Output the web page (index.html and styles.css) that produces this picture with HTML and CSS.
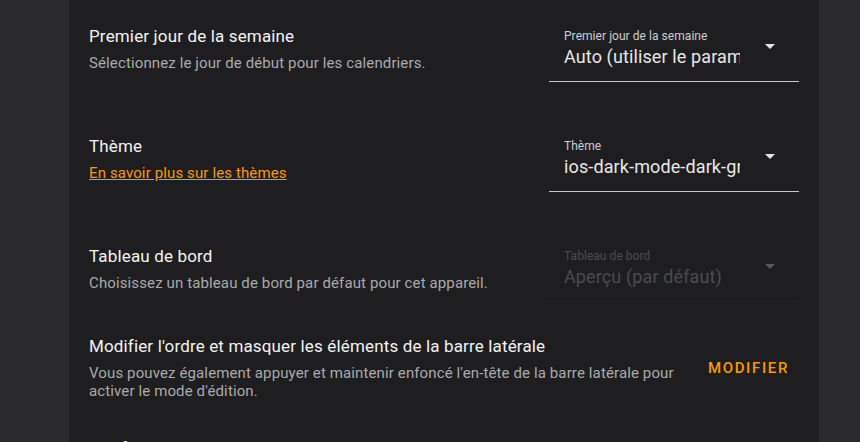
FILE: index.html
```html
<!DOCTYPE html>
<html lang="fr">
<head>
  <meta charset="UTF-8" />
  <meta name="viewport" content="width=device-width, initial-scale=1.0"/>
  <title>Profil</title>
  <link rel="stylesheet" href="styles.css">
</head>
<body>
  <div class="card">
    <div class="row pick">
      <div class="info">
        <div class="heading">Premier jour de la semaine</div>
        <div class="desc">Sélectionnez le jour de début pour les calendriers.</div>
      </div>
      <div class="select">
        <div class="field">
          <span class="label">Premier jour de la semaine</span>
          <span class="value">Auto (utiliser le paramètre de langue)</span>
        </div>
        <span class="arrow"></span>
      </div>
    </div>

    <div class="row pick">
      <div class="info">
        <div class="heading">Thème</div>
        <div class="desc"><a href="#" class="link">En savoir plus sur les thèmes</a></div>
      </div>
      <div class="select">
        <div class="field">
          <span class="label">Thème</span>
          <span class="value">ios-dark-mode-dark-green</span>
        </div>
        <span class="arrow"></span>
      </div>
    </div>

    <div class="row pick">
      <div class="info">
        <div class="heading">Tableau de bord</div>
        <div class="desc">Choisissez un tableau de bord par défaut pour cet appareil.</div>
      </div>
      <div class="select disabled">
        <div class="field">
          <span class="label">Tableau de bord</span>
          <span class="value">Aperçu (par défaut)</span>
        </div>
        <span class="arrow"></span>
      </div>
    </div>

    <div class="row action">
      <div class="info">
        <div class="heading">Modifier l'ordre et masquer les éléments de la barre latérale</div>
        <div class="desc">Vous pouvez également appuyer et maintenir enfoncé l'en-tête de la barre latérale pour activer le mode d'édition.</div>
      </div>
      <button class="text-btn">Modifier</button>
    </div>

    <div class="row next">
      <div class="info">
        <div class="heading">Notifications push</div>
        <div class="desc">Envoyer des notifications à cet appareil.</div>
      </div>
    </div>
  </div>
</body>
</html>
```

FILE: styles.css
```css
body {
  margin: 0;
  background: #2a2a2c;
  font-family: Roboto, "Noto Sans", sans-serif;
  overflow: hidden;
}

.card {
  margin: -7px 0 0 69px;
  width: 750px;
  min-height: 470px;
  background: #1e1e20;
}

.row {
  display: flex;
  align-items: center;
  gap: 16px;
  padding: 0 20px;
}

.row.pick {
  min-height: 110px;
}

.info {
  flex: 1;
}

.heading {
  font-size: 17px;
  line-height: 24px;
  letter-spacing: 0.15px;
  color: #f3f3f3;
}

.desc {
  margin-top: 6px;
  font-size: 15px;
  line-height: 18px;
  letter-spacing: 0.12px;
  color: #aaaaac;
}

.link {
  color: #ff9800;
}

/* dropdown */
.select {
  display: flex;
  align-items: flex-start;
  box-sizing: border-box;
  width: 250px;
  height: 56px;
  margin-top: 12px;
  padding: 2px 0 0 15px;
  border-bottom: 1px solid #c8c8c8;
}

.field {
  width: 176px;
  overflow: hidden;
  white-space: nowrap;
}

.label {
  display: block;
  font-size: 12px;
  line-height: 16px;
  letter-spacing: 0.05px;
  color: #cfcfd0;
}

.value {
  display: block;
  margin-top: 1px;
  font-size: 18px;
  line-height: 24px;
  letter-spacing: 0.12px;
  color: #e8e8e8;
}

.arrow {
  width: 0;
  height: 0;
  margin: 16px 0 0 25px;
  border-left: 5px solid transparent;
  border-right: 5px solid transparent;
  border-top: 5px solid #e4e4e4;
}

.select.disabled {
  border-bottom-color: #252527;
}

.select.disabled .label,
.select.disabled .value {
  color: #4c4c4e;
}

.select.disabled .arrow {
  border-top-color: #58585a;
}

.row.action {
  padding: 11px 22px 11px 20px;
}

.text-btn {
  height: 36px;
  margin-top: 2px;
  padding: 0 8px;
  border: none;
  background: none;
  font-family: Roboto, sans-serif;
  font-size: 15px;
  font-weight: 500;
  letter-spacing: 1.65px;
  text-transform: uppercase;
  color: #ff9800;
  cursor: pointer;
}

.row.next {
  padding-top: 25px;
}
```
